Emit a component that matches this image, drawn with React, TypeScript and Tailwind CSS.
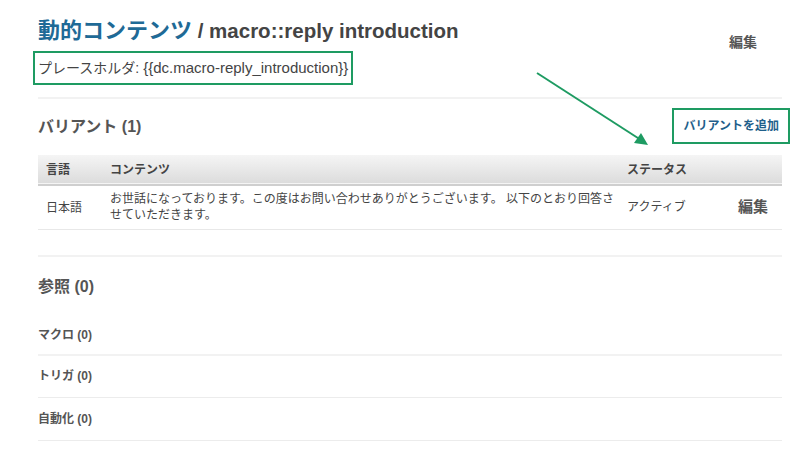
import React from "react";

const font = "[font-family:'Liberation_Sans','Noto_Sans_CJK_JP',sans-serif]";

export default function App(): JSX.Element {
  const refs = [
    { label: "マクロ (0)", h: "h-[39px] border-b-2 border-[#f2f2f2]" },
    { label: "トリガ (0)", h: "h-[42px] border-b border-[#ececec]" },
    { label: "自動化 (0)", h: "h-[43px] border-b border-[#ececec]" },
  ];

  return (
    <div className={`relative w-[800px] h-[466px] bg-white overflow-hidden ${font}`}>
      <div className="ml-[38px] w-[744px]">
        {/* header */}
        <div className="flex items-start justify-between h-[26px] mt-[18px]">
          <h1 className="text-[22px] leading-[26px] font-bold text-[#444] whitespace-nowrap">
            <span className="text-[#1f6a96]">動的コンテンツ</span>
            <span className="text-[20.5px]"> / macro::reply introduction</span>
          </h1>
          <span className="mt-[14px] mr-[25px] text-[14px] font-bold text-[#555] whitespace-nowrap">編集</span>
        </div>
        <div className="mt-[7px] h-[34px]">
          <span className="inline-flex items-center h-[34px] -ml-[5px] px-[3px] border-2 border-[#1e9b62] text-[14px] text-[#444]">
            プレースホルダ:<span className="text-[15px] ml-[4px]">{"{{dc.macro-reply_introduction}}"}</span>
          </span>
        </div>
        <div className="mt-[12px] h-[2px] bg-[#f2f2f2]" />

        {/* variants */}
        <div className="flex items-center justify-between h-[56px]">
          <h2 className="text-[16px] font-bold text-[#555]">バリアント (1)</h2>
          <span className="-mr-[8px] mt-[-2px] inline-flex items-center h-[36px] px-[9px] border-2 border-[#1e9b62] text-[12px] font-bold text-[#1f5f8b]">
            バリアントを追加
          </span>
        </div>
        <table className="w-full border-collapse text-[12px] text-[#444]">
          <thead>
            <tr className="h-[30px] bg-gradient-to-b from-[#f5f5f5] to-[#dcdcdc] border-b-2 border-[#cfcfcf] text-left">
              <th className="w-[72px] pl-[8px] font-bold">言語</th>
              <th className="font-bold">コンテンツ</th>
              <th className="w-[155px] font-bold">ステータス</th>
            </tr>
          </thead>
          <tbody>
            <tr className="h-[44px] border-b border-[#e8e8e8]">
              <td className="pl-[8px] pt-[2px]">日本語</td>
              <td className="pr-[6px] leading-[16px]">
                お世話になっております。この度はお問い合わせありがとうございます。 以下のとおり回答させていただきます。
              </td>
              <td>
                <div className="flex items-center">
                  <span className="w-[111px]">アクティブ</span>
                  <span className="text-[15px] font-bold text-[#555]">編集</span>
                </div>
              </td>
            </tr>
          </tbody>
        </table>
        <div className="mt-[25px] h-[2px] bg-[#f2f2f2]" />

        {/* references */}
        <div className="h-[60px] flex items-center">
          <h2 className="text-[16px] font-bold text-[#555]">参照 (0)</h2>
        </div>
        <div>
          {refs.map((r) => (
            <div key={r.label} className={`flex items-center ${r.h}`}>
              <span className="text-[12px] font-bold text-[#555]">{r.label}</span>
            </div>
          ))}
        </div>
      </div>

      {/* annotation arrow */}
      <svg className="absolute left-0 top-0 pointer-events-none" width="800" height="466">
        <line x1="537" y1="73" x2="641" y2="140" stroke="#1e9b62" strokeWidth="2" />
        <polygon points="648,145 634,143 641,133" fill="#1e9b62" />
      </svg>
    </div>
  );
}
